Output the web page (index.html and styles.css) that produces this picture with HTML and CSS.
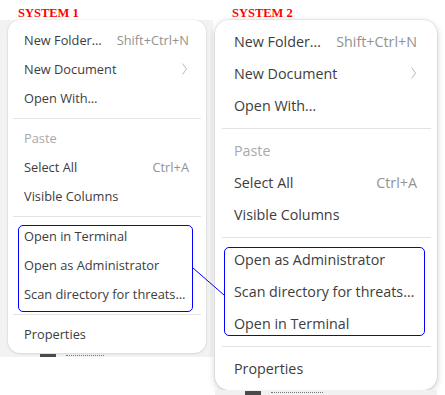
FILE: index.html
```html
<!DOCTYPE html>
<html lang="en">
  <head>
    <meta charset="UTF-8" />
    <meta name="viewport" content="width=device-width, initial-scale=1.0" />
    <title>Context Menu Comparison</title>
    <link rel="stylesheet" href="styles.css">
  </head>
  <body>
    <div class="compare">
      <section class="shot shot-one">
        <h2 class="label">SYSTEM 1</h2>
        <div class="backdrop">
          <div class="menu">
            <div class="item"><span>New Folder…</span><span class="key">Shift+Ctrl+N</span></div>
            <div class="item">
              <span>New Document</span>
              <svg class="chev" viewBox="0 0 5 12"><polyline points="0.5,0.5 4.5,6 0.5,11.5" /></svg>
            </div>
            <div class="item"><span>Open With…</span></div>
            <div class="sep"></div>
            <div class="item off"><span>Paste</span></div>
            <div class="item"><span>Select All</span><span class="key">Ctrl+A</span></div>
            <div class="item"><span>Visible Columns</span></div>
            <div class="sep"></div>
            <div class="group">
              <div class="item"><span>Open in Terminal</span></div>
              <div class="item"><span>Open as Administrator</span></div>
              <div class="item"><span>Scan directory for threats…</span></div>
            </div>
            <div class="sep"></div>
            <div class="item"><span>Properties</span></div>
          </div>
          <div class="peek"><i class="icon"></i><i class="word"></i></div>
        </div>
      </section>

      <section class="shot shot-two">
        <h2 class="label">SYSTEM 2</h2>
        <div class="menu">
          <div class="item"><span>New Folder…</span><span class="key">Shift+Ctrl+N</span></div>
          <div class="item">
            <span>New Document</span>
            <svg class="chev" viewBox="0 0 5 12"><polyline points="0.5,0.5 4.5,6 0.5,11.5" /></svg>
          </div>
          <div class="item"><span>Open With…</span></div>
          <div class="sep"></div>
          <div class="item off"><span>Paste</span></div>
          <div class="item"><span>Select All</span><span class="key">Ctrl+A</span></div>
          <div class="item"><span>Visible Columns</span></div>
          <div class="sep"></div>
          <div class="group">
            <div class="item"><span>Open as Administrator</span></div>
            <div class="item"><span>Scan directory for threats…</span></div>
            <div class="item"><span>Open in Terminal</span></div>
          </div>
          <div class="sep"></div>
          <div class="item"><span>Properties</span></div>
        </div>
        <div class="peek"><i class="icon"></i><i class="word"></i></div>
      </section>
    </div>

    <!-- line joining the two highlighted groups -->
    <svg class="link" width="445" height="395" viewBox="0 0 445 395">
      <line x1="193" y1="268" x2="224" y2="295" />
    </svg>
  </body>
</html>
```

FILE: styles.css
```css
* {
  box-sizing: border-box;
  margin: 0;
  padding: 0;
}

body {
  position: relative;
  width: 445px;
  height: 395px;
  overflow: hidden;
  background: #ffffff;
  color: #3d3d3d;
  font-family: "Open Sans", "Noto Sans", sans-serif;
}

.compare {
  display: flex;
  align-items: flex-start;
}

.label {
  height: 20px;
  padding-top: 6px;
  font: bold 12.5px/14px "Liberation Serif", serif;
  color: #ff0000;
}

/* system 1 */

.shot-one {
  width: 213px;
}

.shot-one .label {
  padding-left: 18px;
}

.shot-one .backdrop {
  background: #f2f2f2;
  padding: 0 7px 0 8px;
}

.menu {
  background: #ffffff;
}

.shot-one .menu {
  padding: 6px 0 4px;
  font-size: 12.8px;
  border-radius: 12px;
  box-shadow: 0 0 0 1px rgba(0, 0, 0, 0.04), 0 1px 3px rgba(0, 0, 0, 0.08);
}

.item {
  display: flex;
  align-items: center;
  justify-content: space-between;
  white-space: nowrap;
  padding-bottom: 2px !important;
}

.shot-one .item {
  height: 29px;
  padding: 0 17px 0 16px;
}

.key {
  color: #929292;
}

.off {
  color: #a9a9a9;
}

.chev {
  width: 5px;
  height: 12px;
  fill: none;
  stroke: #b8b8b8;
  stroke-width: 1;
}

.shot-one .chev {
  margin-right: 2px;
}

.sep {
  display: flex;
  align-items: center;
}

.sep::before {
  content: "";
  flex: 1;
  height: 1px;
  background: #e3e3e3;
}

.shot-one .sep {
  height: 11px;
  margin: 0 5px;
}

.group {
  position: relative;
}

.group::before {
  content: "";
  position: absolute;
  border: 1px solid #0000ff;
  border-radius: 5px;
  pointer-events: none;
}

.shot-one .group::before {
  top: 3px;
  bottom: -2.5px;
  left: 10px;
  right: 13px;
}

/* sliver of the file list showing under each menu */
.peek {
  display: flex;
  align-items: flex-start;
  gap: 10px;
  height: 4px;
  overflow: hidden;
}

.peek i {
  display: block;
  margin-top: 1px;
}

.peek .icon {
  width: 16px;
  height: 6px;
  background: #4a4a4a;
}

.peek .word {
  width: 38px;
  height: 2px;
  margin-top: 2px;
  border-top: 1px dotted #777777;
}

.shot-one .peek {
  padding-left: 32px;
}

/* system 2 */

.shot-two {
  width: 232px;
  padding-left: 2px;
}

.shot-two .label {
  padding-left: 17px;
}

.shot-two .menu {
  width: 222px;
  padding: 6px 0 5px;
  font-size: 14.3px;
  border-radius: 14px;
  box-shadow: 0 0 0 1px rgba(0, 0, 0, 0.06), 0 2px 7px rgba(0, 0, 0, 0.2);
}

.shot-two .item {
  height: 32px;
  padding: 0 20px 0 19px;
}

.shot-two .chev {
  margin-right: 1px;
}

.shot-two .sep {
  height: 13px;
  margin: 0 6px 0 7px;
}

.shot-two .group::before {
  top: 3px;
  bottom: 4px;
  left: 9px;
  right: 12px;
}

.shot-two .peek {
  width: 222px;
  height: 5px;
  padding-left: 30px;
  background: #f1f1f1;
}

.shot-two .peek .word {
  width: 52px;
}

.link {
  position: absolute;
  top: 0;
  left: 0;
  pointer-events: none;
}

.link line {
  stroke: #0000ff;
  stroke-width: 1;
}
```
